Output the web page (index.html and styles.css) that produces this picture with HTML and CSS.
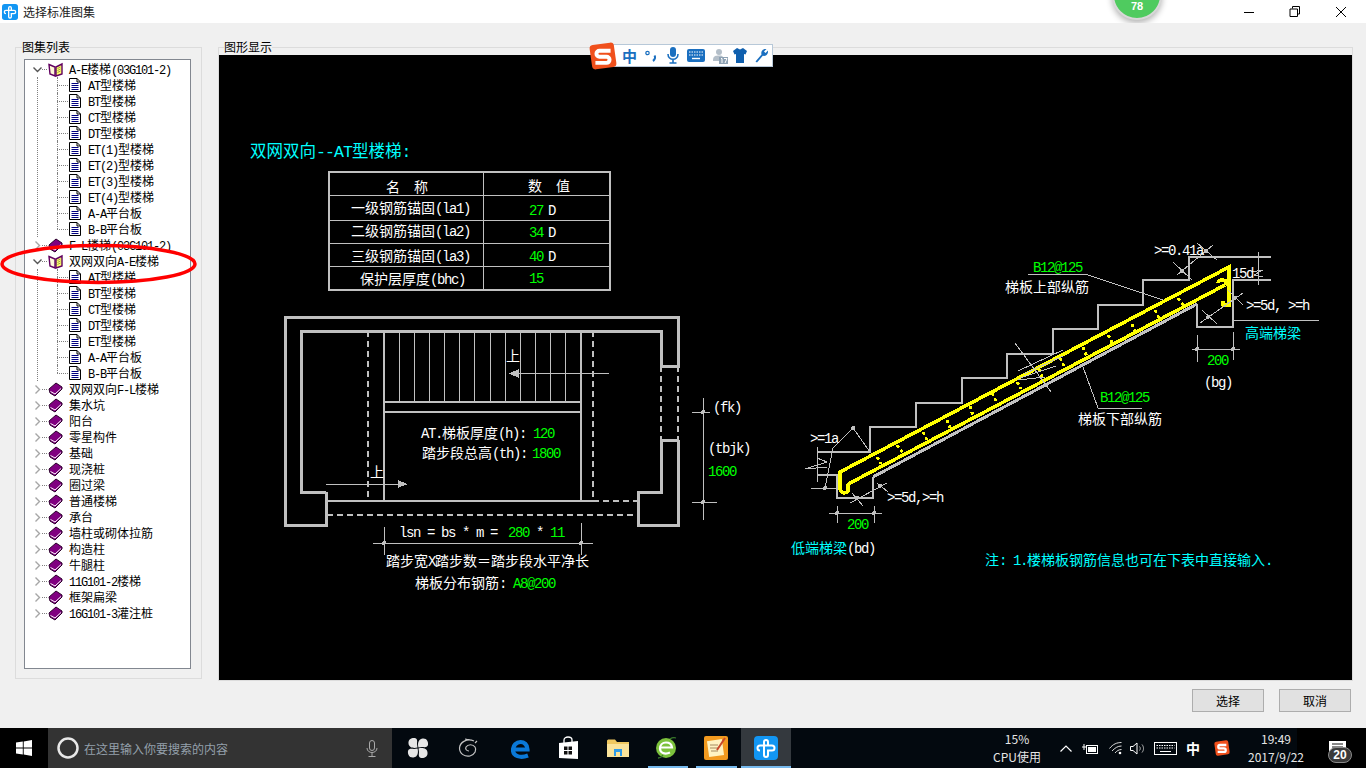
FILE: index.html
```html
<!DOCTYPE html>
<html lang="zh-CN">
<head>
<meta charset="utf-8">
<title>选择标准图集</title>
<link rel="stylesheet" href="styles.css">
</head>
<body>
<svg class="sprite" aria-hidden="true">
  <symbol id="i-app" viewBox="0 0 24 24">
    <rect width="24" height="24" rx="4" fill="#1296f3"/>
    <path d="M6 14.5a2.5 2.5 0 0 1 0-5H18a2.5 2.5 0 0 1 0 5H14V19a2 2 0 0 1-4 0V6a2 2 0 0 1 4 0V9" fill="none" stroke="#fff" stroke-width="2"/>
  </symbol>
  <symbol id="i-sogou" viewBox="0 0 24 24">
    <rect x="1.5" y="1.5" width="21" height="21" rx="3" fill="#f0501c" transform="rotate(-8 12 12)"/>
    <path d="M18.5 7.5H9a2.6 2.6 0 0 0 0 5.2H15a2.6 2.6 0 0 1 0 5.2H5.5" fill="none" stroke="#fff" stroke-width="3.4"/>
  </symbol>
  <symbol id="i-book" viewBox="0 0 15 15">
    <path d="M1 7 8 1 14 5V7L7 14 2 11Z" fill="#800080" stroke="#2a002a"/>
    <path d="M2.5 9.5 7 12 13 6.5" fill="none" stroke="#fff"/>
  </symbol>
  <symbol id="i-open" viewBox="0 0 15 15">
    <path d="M1 2.5 7 5V14L2 12Z" fill="#fff8d8" stroke="#600060" stroke-width="1.4"/>
    <path d="M8 5 14 2V12L8 14Z" fill="#ffff70" stroke="#600060" stroke-width="1.4"/>
    <path d="M9.5 6.5 12.5 5M9.5 8.5 12.5 7M9.5 10.5 12.5 9" stroke="#a0a040"/>
  </symbol>
  <symbol id="i-doc" viewBox="0 0 12 14">
    <path d="M.5.5H8L11.5 4V13.5H.5Z" fill="#fff" stroke="#000"/>
    <path d="M8 .5V4H11.5" fill="none" stroke="#000"/>
    <path d="M2.5 5.5H9.5M2.5 7.5H9.5M2.5 9.5H9.5M2.5 11.5H9.5" stroke="#000080"/>
  </symbol>
  <symbol id="i-down" viewBox="0 0 9 9"><path d="M.5 2.5 4.5 6.5 8.5 2.5" fill="none" stroke="#555" stroke-width="1.4"/></symbol>
  <symbol id="i-right" viewBox="0 0 9 9"><path d="M2.5.5 6.5 4.5 2.5 8.5" fill="none" stroke="#a6a6a6" stroke-width="1.4"/></symbol>
  <symbol id="i-petal" viewBox="0 0 22 22"><path d="M10.500 10.500C7 11.500 2 11 1.500 6.500C1 2 5 .5 8 1C11 2 10 5 10 7Z"/></symbol>
</svg>

<header class="titlebar">
  <svg class="title-icon"><use href="#i-app"/></svg>
  <span class="title-text">选择标准图集</span>
  <div class="win-controls">
    <span class="win-btn"><svg width="12" height="12" viewBox="0 0 12 12"><path d="M1 6.5H11" stroke="#000"/></svg></span>
    <span class="win-btn"><svg width="12" height="12" viewBox="0 0 12 12"><path d="M3.5 2.5V.5H10.5V8H8.5M1 3H8.5V10.5H1Z" fill="none" stroke="#000"/></svg></span>
    <span class="win-btn"><svg width="12" height="12" viewBox="0 0 12 12"><path d="M1 1 11 11M11 1 1 11" stroke="#000"/></svg></span>
  </div>
  <div class="gauge"><span>78</span></div>
</header>

<main class="dialog">
  <div class="content">
    <section class="group group-list">
      <span class="legend">图集列表</span>
      <div class="tree">
        <div class="row"><svg class="chev"><use href="#i-down"/></svg><i class="stub"></i><svg class="book"><use href="#i-open"/></svg><span class="label"><span class="l">A-E</span>楼梯<span class="l">(03G101-2)</span></span></div>
        <div class="kids">
          <div class="leaf"><svg class="doc"><use href="#i-doc"/></svg><span class="leaf-label"><span class="l">AT</span>型楼梯</span></div>
          <div class="leaf"><svg class="doc"><use href="#i-doc"/></svg><span class="leaf-label"><span class="l">BT</span>型楼梯</span></div>
          <div class="leaf"><svg class="doc"><use href="#i-doc"/></svg><span class="leaf-label"><span class="l">CT</span>型楼梯</span></div>
          <div class="leaf"><svg class="doc"><use href="#i-doc"/></svg><span class="leaf-label"><span class="l">DT</span>型楼梯</span></div>
          <div class="leaf"><svg class="doc"><use href="#i-doc"/></svg><span class="leaf-label"><span class="l">ET(1)</span>型楼梯</span></div>
          <div class="leaf"><svg class="doc"><use href="#i-doc"/></svg><span class="leaf-label"><span class="l">ET(2)</span>型楼梯</span></div>
          <div class="leaf"><svg class="doc"><use href="#i-doc"/></svg><span class="leaf-label"><span class="l">ET(3)</span>型楼梯</span></div>
          <div class="leaf"><svg class="doc"><use href="#i-doc"/></svg><span class="leaf-label"><span class="l">ET(4)</span>型楼梯</span></div>
          <div class="leaf"><svg class="doc"><use href="#i-doc"/></svg><span class="leaf-label"><span class="l">A-A</span>平台板</span></div>
          <div class="leaf"><svg class="doc"><use href="#i-doc"/></svg><span class="leaf-label"><span class="l">B-B</span>平台板</span></div>
        </div>
        <div class="row"><svg class="chev"><use href="#i-right"/></svg><i class="stub"></i><svg class="book"><use href="#i-book"/></svg><span class="label"><span class="l">F-L</span>楼梯<span class="l">(03G101-2)</span></span></div>
        <div class="row"><svg class="chev"><use href="#i-down"/></svg><i class="stub"></i><svg class="book"><use href="#i-open"/></svg><span class="label">双网双向<span class="l">A-E</span>楼梯</span></div>
        <div class="kids">
          <div class="leaf"><svg class="doc"><use href="#i-doc"/></svg><span class="leaf-label"><span class="l">AT</span>型楼梯</span></div>
          <div class="leaf"><svg class="doc"><use href="#i-doc"/></svg><span class="leaf-label"><span class="l">BT</span>型楼梯</span></div>
          <div class="leaf"><svg class="doc"><use href="#i-doc"/></svg><span class="leaf-label"><span class="l">CT</span>型楼梯</span></div>
          <div class="leaf"><svg class="doc"><use href="#i-doc"/></svg><span class="leaf-label"><span class="l">DT</span>型楼梯</span></div>
          <div class="leaf"><svg class="doc"><use href="#i-doc"/></svg><span class="leaf-label"><span class="l">ET</span>型楼梯</span></div>
          <div class="leaf"><svg class="doc"><use href="#i-doc"/></svg><span class="leaf-label"><span class="l">A-A</span>平台板</span></div>
          <div class="leaf"><svg class="doc"><use href="#i-doc"/></svg><span class="leaf-label"><span class="l">B-B</span>平台板</span></div>
        </div>
        <div class="row"><svg class="chev"><use href="#i-right"/></svg><i class="stub"></i><svg class="book"><use href="#i-book"/></svg><span class="label">双网双向<span class="l">F-L</span>楼梯</span></div>
        <div class="row"><svg class="chev"><use href="#i-right"/></svg><i class="stub"></i><svg class="book"><use href="#i-book"/></svg><span class="label">集水坑</span></div>
        <div class="row"><svg class="chev"><use href="#i-right"/></svg><i class="stub"></i><svg class="book"><use href="#i-book"/></svg><span class="label">阳台</span></div>
        <div class="row"><svg class="chev"><use href="#i-right"/></svg><i class="stub"></i><svg class="book"><use href="#i-book"/></svg><span class="label">零星构件</span></div>
        <div class="row"><svg class="chev"><use href="#i-right"/></svg><i class="stub"></i><svg class="book"><use href="#i-book"/></svg><span class="label">基础</span></div>
        <div class="row"><svg class="chev"><use href="#i-right"/></svg><i class="stub"></i><svg class="book"><use href="#i-book"/></svg><span class="label">现浇桩</span></div>
        <div class="row"><svg class="chev"><use href="#i-right"/></svg><i class="stub"></i><svg class="book"><use href="#i-book"/></svg><span class="label">圈过梁</span></div>
        <div class="row"><svg class="chev"><use href="#i-right"/></svg><i class="stub"></i><svg class="book"><use href="#i-book"/></svg><span class="label">普通楼梯</span></div>
        <div class="row"><svg class="chev"><use href="#i-right"/></svg><i class="stub"></i><svg class="book"><use href="#i-book"/></svg><span class="label">承台</span></div>
        <div class="row"><svg class="chev"><use href="#i-right"/></svg><i class="stub"></i><svg class="book"><use href="#i-book"/></svg><span class="label">墙柱或砌体拉筋</span></div>
        <div class="row"><svg class="chev"><use href="#i-right"/></svg><i class="stub"></i><svg class="book"><use href="#i-book"/></svg><span class="label">构造柱</span></div>
        <div class="row"><svg class="chev"><use href="#i-right"/></svg><i class="stub"></i><svg class="book"><use href="#i-book"/></svg><span class="label">牛腿柱</span></div>
        <div class="row"><svg class="chev"><use href="#i-right"/></svg><i class="stub"></i><svg class="book"><use href="#i-book"/></svg><span class="label"><span class="l">11G101-2</span>楼梯</span></div>
        <div class="row"><svg class="chev"><use href="#i-right"/></svg><i class="stub"></i><svg class="book"><use href="#i-book"/></svg><span class="label">框架扁梁</span></div>
        <div class="row"><svg class="chev"><use href="#i-right"/></svg><i class="stub"></i><svg class="book"><use href="#i-book"/></svg><span class="label"><span class="l">16G101-3</span>灌注桩</span></div>
      </div>
    </section>

    <section class="group group-view">
      <span class="legend">图形显示</span>
      <svg class="drawing" viewBox="219 55 1133 625" width="1133" height="625">
        <!-- table -->
        <rect class="w2" x="329" y="172" width="281" height="118"/>
        <path class="w1" d="M483 172V290M329 195H610M329 220H610M329 243H610M329 266H610"/>
        <text class="t title" x="250" y="157">双网双向<tspan class="lt">--AT</tspan>型楼梯<tspan class="lt">:</tspan></text>
        <text class="t" x="386 414" y="192">名称</text>
        <text class="t" x="528 556" y="191">数值</text>
        <text class="t" x="351" y="213">一级钢筋锚固<tspan class="l">(la1)</tspan></text>
        <text class="t" x="351" y="236">二级钢筋锚固<tspan class="l">(la2)</tspan></text>
        <text class="t" x="351" y="261">三级钢筋锚固<tspan class="l">(la3)</tspan></text>
        <text class="t" x="360" y="284">保护层厚度<tspan class="l">(bhc)</tspan></text>
        <text class="n g" x="529" y="215">27</text><text class="n" x="548" y="215">D</text>
        <text class="n g" x="529" y="237">34</text><text class="n" x="548" y="237">D</text>
        <text class="n g" x="529" y="261">40</text><text class="n" x="548" y="261">D</text>
        <text class="n g" x="529" y="283">15</text>

        <!-- plan -->
        <path class="w3" d="M326 492V525H285V317H678V366H661V331H301V492H326"/>
        <path class="w3" d="M661 366V331M678 440V525H638V492H661V440H678"/>
        <path class="w2" d="M661 366H678M326 501H593M384 331V501M581 331V501M384 402H581M384 412H581"/>
        <path class="d2" d="M661 366V440M678 366V440M368 331V501M593 331V501M593 501H638M327 515H638"/>
        <path class="w1" d="M399.5 331V402M414.5 331V402M429.5 331V402M444.5 331V402M459.5 331V402M474.5 331V402M490 331V402M505.5 331V402M520.5 331V402M535.5 331V402M550.5 331V402M565.5 331V402"/>
        <path class="w1" d="M509 373.5H609M326 484H407"/>
        <path class="fillg" d="M509 373.5 519 369V378ZM407 484 398 480V488Z"/>
        <text class="t" x="506" y="361">上</text>
        <text class="t" x="370" y="477">上</text>
        <text class="t" x="421" y="438"><tspan class="l">AT.</tspan>梯板厚度<tspan class="l">(h):</tspan></text>
        <text class="n g" x="533" y="438">120</text>
        <text class="t" x="422" y="458">踏步段总高<tspan class="l">(th):</tspan></text>
        <text class="n g" x="532" y="458">1800</text>
        <text class="n" x="713" y="412">(fk)</text>
        <text class="n" x="708" y="453">(tbjk)</text>
        <text class="n g" x="708" y="476">1600</text>
        <path class="w1" d="M703 398V520M692 412H710M692 502H717M373 543H593M384 527V555M581 523V555"/>
        <circle class="fillg" cx="703" cy="412" r="2"/><circle class="fillg" cx="703" cy="502" r="2"/>
        <circle class="fillg" cx="384" cy="543" r="2"/><circle class="fillg" cx="581" cy="543" r="2"/>
        <text class="n" x="399" y="537">lsn = bs * m =</text>
        <text class="n g" x="508" y="537">280</text><text class="n" x="536" y="537">*</text><text class="n g" x="550" y="537">11</text>
        <text class="t" x="386" y="566">踏步宽<tspan class="l">X</tspan>踏步数＝踏步段水平净长</text>
        <text class="t" x="415" y="588">梯板分布钢筋<tspan class="l">:</tspan></text>
        <text class="n g" x="513" y="588">A8@200</text>

        <!-- section -->
        <path class="w2" d="M817 475H837V498H873V477M1197 304V327H1233V280H1271"/>
        <path class="w2" d="M817 452H870V427H916V403H962V378H1007V354H1053V329H1098V305H1143V280H1189V257H1271"/>
        <path class="w3" d="M873 477 1197 304"/>
        <path class="y" d="M1225 285 852 482Q847 484 848 488M1229 307V267L840 472V489Q843 496 848 491V486M1225 285Q1228 280 1222 280Q1218 280 1218 283M1229 304Q1226 306 1223 305V301"/>
        <path class="ys" d="M1178 298 1183 305M1155 310 1159 318M1132 324 1135 332M1108 335 1113 344M1083 347 1087 357M1060 358 1065 368M1039 369 1043 380M1017 382 1021 389M992 393 997 403M970 406 973 416M947 420 950 428M923 432 928 442M897 445 903 453M877 457 881 464"/>
        <path class="w1" d="M1177 275 1213 245M1173 262 1192 280M1197 243 1217 260M1258 252V285M1252 272 1263 270 1254 275 1263 277M1243 293 1200 323M1228 290 1243 305M1202 310 1217 324M1233 320H1319M1192 349H1240M1197 335V362M1233 332V360M1028 274H1085L1163 300M1083 367 1098 408H1142"/>
        <path class="w1" d="M1015 343 1051 392M1018 371 1063 350M1024 374 1063 356M1020 378 1056 366M1018 380 1045 377"/>
        <path class="w1" d="M853 428 870 452M853 428 833 448 825 488M811 488H837M817 447V482M817 458 827 462 805 469 827 467M850 503 887 483M877 483 888 492M852 493 863 506M829 513H882M837 506V523M874 506V523"/>
        <circle class="fillg" cx="1182" cy="271" r="2"/><circle class="fillg" cx="1206" cy="251" r="2"/>
        <circle class="fillg" cx="1235" cy="298" r="2"/><circle class="fillg" cx="1208" cy="317" r="2"/>
        <circle class="fillg" cx="1197" cy="349" r="2"/><circle class="fillg" cx="1233" cy="349" r="2"/>
        <circle class="fillg" cx="853" cy="428" r="2"/><circle class="fillg" cx="825" cy="488" r="2"/>
        <circle class="fillg" cx="880" cy="486" r="2"/><circle class="fillg" cx="857" cy="498" r="2"/>
        <circle class="fillg" cx="837" cy="513" r="2"/><circle class="fillg" cx="874" cy="513" r="2"/>
        <text class="n" x="1154" y="255">&gt;=0.41a</text>
        <text class="n" x="1232" y="278">15d</text>
        <text class="n" x="1246" y="310">&gt;=5d, &gt;=h</text>
        <text class="t c" x="1245" y="338">高端梯梁</text>
        <text class="n g" x="1207" y="365">200</text>
        <text class="n" x="1204" y="387">(bg)</text>
        <text class="n g" x="1033" y="272">B12@125</text>
        <text class="t" x="1005" y="292">梯板上部纵筋</text>
        <text class="n g" x="1100" y="402">B12@125</text>
        <text class="t" x="1078" y="424">梯板下部纵筋</text>
        <text class="n" x="810" y="443">&gt;=1a</text>
        <text class="n" x="887" y="502">&gt;=5d,&gt;=h</text>
        <text class="n g" x="847" y="529">200</text>
        <text class="t c" x="791" y="553">低端梯梁<tspan class="lw">(bd)</tspan></text>
        <text class="t c" x="985" y="565">注<tspan class="l">: 1.</tspan>楼梯板钢筋信息也可在下表中直接输入<tspan class="l">.</tspan></text>
      </svg>
    </section>
  </div>
  <footer class="actions">
    <button class="btn" type="button">选择</button>
    <button class="btn" type="button">取消</button>
  </footer>

  <svg class="red-ring" width="200" height="44" viewBox="0 0 200 44"><ellipse cx="98.500" cy="22" rx="96.500" ry="18.500"/></svg>

  <div class="ime">
    <svg class="ime-logo"><use href="#i-sogou"/></svg>
    <span class="ime-zh">中</span>
    <svg width="12" height="14" viewBox="0 0 12 14"><circle cx="2.5" cy="4" r="1.7" fill="none" stroke="#1a6fc0" stroke-width="1.2"/><path d="M9.5 6.5C10.5 8 10 10.5 8 12" fill="none" stroke="#1a6fc0" stroke-width="2.2"/></svg>
    <svg width="12" height="17" viewBox="0 0 12 17"><rect x="3" y="0" width="6" height="10" rx="3" fill="#1a6fc0"/><path d="M1 7C1 14 11 14 11 7M6 12V16M2.5 16H9.5" fill="none" stroke="#1a6fc0" stroke-width="1.6"/></svg>
    <svg width="18" height="13" viewBox="0 0 18 13"><rect width="18" height="13" rx="2" fill="#1a6fc0"/><path d="M2 3H16M2 6H16" stroke="#fff" stroke-dasharray="1.5 1"/><path d="M5 9.5H13" stroke="#fff" stroke-width="1.4"/></svg>
    <svg width="16" height="16" viewBox="0 0 16 16"><circle cx="7" cy="4" r="3" fill="#b4bfc9"/><path d="M1 12C1 8 4 7.500 7 7.500S11 8 11 10V13H1Z" fill="#b4bfc9"/><rect x="7" y="9" width="9" height="7" fill="#8ea2b4"/><path d="M9 10.500H10V15M12 10.500H15L13 15" fill="none" stroke="#fff"/></svg>
    <svg width="14" height="15" viewBox="0 0 14 15"><path d="M4 0 7 1.500 10 0 14 3 12.500 6.500 11 6V15H3V6L1.500 6.500 0 3Z" fill="#0f5fae"/></svg>
    <svg width="14" height="15" viewBox="0 0 14 15"><path d="M1.500 13.500 7.500 6.500C6.500 3 9 .5 12.500 1L10 3.500 11.500 5 14 2.500C14.500 6 12 8.500 8.800 7.800L3 14.500Z" fill="#1a6fc0"/></svg>
  </div>
</main>

<nav class="taskbar">
  <div class="start">
    <svg width="16" height="16" viewBox="0 0 16 16"><path d="M0 2.500 6.800 1.500V7.500H0ZM7.700 1.400 16 0V7.500H7.700ZM0 8.500H6.800V14.500L0 13.500ZM7.700 8.500H16V16L7.700 14.600Z" fill="#fff"/></svg>
  </div>
  <div class="search">
    <svg class="cortana" width="22" height="22" viewBox="0 0 22 22"><circle cx="11" cy="11" r="9.500" fill="none" stroke="#e8e8e8" stroke-width="2.500"/></svg>
    <span class="search-text">在这里输入你要搜索的内容</span>
    <svg class="search-mic" width="12" height="17" viewBox="0 0 12 17"><rect x="3.500" y=".5" width="5" height="10" rx="2.500" fill="none" stroke="#aaa"/><path d="M1 8C1 14 11 14 11 8M6 13V16.500M2.500 16.500H9.500" fill="none" stroke="#aaa"/></svg>
  </div>
  <div class="apps">
    <span class="app"><svg class="fan" width="22" height="22" viewBox="0 0 22 22"><use href="#i-petal"/><use href="#i-petal" transform="rotate(90 11 11)"/><use href="#i-petal" transform="rotate(180 11 11)"/><use href="#i-petal" transform="rotate(270 11 11)"/></svg></span>
    <span class="app"><svg width="20" height="20" viewBox="0 0 20 20"><path d="M16 3C9 0 2 4 1.500 10C1.500 16 7 19 12 18C17 16.500 19 12 17 9C15 6 10 6 8 9C7 11 8.500 13 11 13M12 2 7 1M17 5 19 3" fill="none" stroke="#c4c4c4" stroke-width="1.200"/></svg></span>
    <span class="app app-edge"><svg width="20" height="21" viewBox="0 0 20 21"><path d="M3.500 11.500H16.500C16.500 6.500 13 4 9.500 4C5.500 4 2 7.500 2 12C2 18 9 20.500 17 17.500" fill="none" stroke="#0a78d7" stroke-width="4.200"/></svg></span>
    <span class="app app-shift"><svg width="21" height="24" viewBox="0 0 21 24"><path d="M1 7 20 5V23L1 22Z" fill="#fff"/><path d="M6 7V4C6 0 14 0 14 4V6" fill="none" stroke="#fff" stroke-width="1.300"/><path d="M6 10.500H9.500V14H6ZM10.500 10.500H14V14H10.500ZM6 15H9.500V18.500H6ZM10.500 15H14V18.500H10.500Z" fill="#111"/></svg></span>
    <span class="app app-shift"><svg width="22" height="18" viewBox="0 0 22 18"><path d="M0 2C0 1 1 .5 1.500 .5H8L10 3H22V18H0Z" fill="#f0c860"/><path d="M0 5H22V18H0Z" fill="#fbe39a"/><path d="M7 10H15V17H13V13H9V17H7Z" fill="#2f9be8"/></svg></span>
    <span class="app"><svg width="22" height="22" viewBox="0 0 22 22"><circle cx="11" cy="11" r="10" fill="#7cc13c"/><path d="M5 10.500H17C16.500 6.500 13 5.500 11 5.500C7.500 5.500 5 8 5 11.500C5 15.500 9.500 18 15 15.500" fill="none" stroke="#fff" stroke-width="2.200"/><path d="M3 21C6 21 8 18 8 18M15 2C18 0 21 1 21 1" fill="none" stroke="#39792a" stroke-width="1.300"/></svg></span>
    <span class="app"><svg width="24" height="24" viewBox="0 0 24 24"><rect width="24" height="24" rx="2" fill="#f29a1f"/><rect x="4" y="4" width="15" height="16" fill="#fff3c2" transform="rotate(-8 12 12)"/><path d="M6 9H14M6 12H14M7 15H14" stroke="#a58a60"/><path d="M13 14 21 2" stroke="#c9482a" stroke-width="2"/></svg></span>
    <span class="app app-active"><svg width="24" height="24"><use href="#i-app"/></svg></span>
  </div>
  <div class="tray">
    <div class="cpu"><span>15%</span><span>CPU使用</span></div>
    <span class="tray-cell w20"><svg width="12" height="7" viewBox="0 0 12 7"><path d="M.5 6.500 6 1 11.500 6.500" fill="none" stroke="#fff" stroke-width="1.200"/></svg></span>
    <span class="tray-cell w28"><svg width="16" height="11" viewBox="0 0 16 11"><rect x="4.500" y="2.500" width="11" height="8" fill="none" stroke="#fff"/><rect x="6" y="4" width="8" height="5" fill="#fff"/><path d="M0 4H4M2 1V7" stroke="#fff"/></svg></span>
    <span class="tray-cell w23"><svg width="13" height="13" viewBox="0 0 13 13"><path d="M.5 6.500C4 2 8 .5 12.500.5M3 9C6 6 8.500 4 12.500 4M6 11C7.500 9 10 7.500 12.500 7.500" fill="none" stroke="#ddd"/><circle cx="11" cy="11" r="1.300" fill="#fff"/></svg></span>
    <span class="tray-cell w21"><svg width="15" height="13" viewBox="0 0 15 13"><path d="M.5 4.500H3L7 1V12L3 8.500H.5Z" fill="none" stroke="#fff"/><path d="M9.500 4.500C10.500 5.500 10.500 7.500 9.500 8.500M12 2.500C14 5 14 8 12 10.500" fill="none" stroke="#bbb"/></svg></span>
    <span class="tray-cell w35"><svg width="23" height="13" viewBox="0 0 23 13"><rect x=".5" y=".5" width="22" height="12" fill="none" stroke="#fff"/><path d="M2.500 3.500H20.500M2.500 6H20.500" stroke="#fff" stroke-dasharray="1.500 1"/><path d="M6 9.500H17" stroke="#fff"/></svg></span>
    <span class="tray-cell w20 tray-zh">中</span>
    <span class="tray-cell w38"><svg width="16" height="16"><use href="#i-sogou"/></svg></span>
    <div class="clock"><span>19:49</span><span>2017/9/22</span></div>
    <span class="tray-cell w55 notif"><svg width="20" height="15" viewBox="0 0 20 15"><path d="M0 0H17V12H0Z" fill="#fff"/><path d="M3 3H14M3 6H14M3 9H10" stroke="#111"/></svg><span class="badge">20</span></span>
  </div>
</nav>
</body>
</html>
```

FILE: styles.css
```css
* { box-sizing: border-box; }
html, body { margin: 0; padding: 0; }
body {
  width: 1366px;
  height: 768px;
  overflow: hidden;
  position: relative;
  background: #f0f0f0;
  font-family: "Noto Sans CJK SC", "Liberation Sans", sans-serif;
  font-size: 12px;
  color: #000;
}
.sprite { position: absolute; width: 0; height: 0; }

/* title bar */
.titlebar {
  position: relative;
  height: 23px;
  background: #fff;
  display: flex;
  align-items: center;
  padding-left: 2px;
  overflow: hidden;
}
.title-icon { width: 16px; height: 16px; }
.title-text { margin-left: 5px; font-size: 12px; color: #222; }
.win-controls { margin-left: auto; display: flex; padding-right: 2px; }
.win-btn { width: 46px; height: 23px; display: flex; align-items: center; justify-content: center; }
.gauge {
  position: absolute;
  left: 1112px;
  top: -30px;
  width: 50px;
  height: 50px;
  border-radius: 50%;
  background: #4fcb5f;
  border: 2px solid #d8d8d8;
  box-shadow: 0 3px 6px rgba(0, 0, 0, .3);
  display: flex;
  align-items: flex-end;
  justify-content: center;
  padding-bottom: 5px;
  color: #fff;
  font-family: "Liberation Sans", sans-serif;
  font-weight: bold;
  font-size: 11px;
  line-height: 13px;
}

/* dialog */
.dialog { position: relative; height: 705px; padding: 24px 13px 0 15px; }
.content { display: flex; align-items: flex-start; gap: 16px; height: 634px; }
.group { border: 1px solid #dcdcdc; }
.group-list { width: 187px; height: 632px; }
.group-view { flex: 1; height: 634px; }
.legend {
  display: block;
  width: max-content;
  height: 14px;
  line-height: 14px;
  margin: -8px 0 0 6px;
  background: #f0f0f0;
  font-size: 12px;
}
.group-view .legend { margin-left: 5px; }

/* tree */
.tree {
  width: 167px;
  height: 610px;
  margin: 5px 0 0 8px;
  padding-top: 1px;
  background: #fff;
  border: 1px solid #828790;
  overflow: hidden;
}
.row { height: 16px; display: flex; align-items: center; padding-left: 8px; white-space: nowrap; }
.chev { width: 9px; height: 9px; flex: none; }
.stub { width: 5px; margin-right: 1px; border-top: 1px dotted #808080; flex: none; }
.book { width: 15px; height: 15px; flex: none; }
.label { display: block; height: 16px; margin-left: 6px; line-height: 16px; }
.l { font-family: "Liberation Mono", monospace; font-size: 12px; line-height: 1; letter-spacing: -1.2px; }
.kids { margin-left: 12px; padding-left: 19px; border-left: 1px dotted #808080; }
.leaf { position: relative; height: 16px; display: flex; align-items: center; padding-left: 12px; white-space: nowrap; }
.leaf::before { content: ""; position: absolute; left: 0; top: 0; height: 16px; border-left: 1px dotted #808080; }
.leaf:last-child::before { height: 8px; }
.leaf::after { content: ""; position: absolute; left: 0; top: 8px; width: 11px; border-top: 1px dotted #808080; }
.doc { width: 12px; height: 14px; flex: none; }
.leaf-label { display: block; height: 16px; margin-left: 7px; line-height: 16px; }

/* drawing */
.drawing { display: block; margin-top: 1px; background: #000; shape-rendering: crispEdges; }
.drawing text { white-space: pre; }
.w1, .w2, .w3, .d2, .y, .ys { fill: none; }
.w1 { stroke: #c0c0c0; stroke-width: 1; }
.w2 { stroke: #c0c0c0; stroke-width: 2; }
.w3 { stroke: #c0c0c0; stroke-width: 3; }
.d2 { stroke: #c0c0c0; stroke-width: 2; stroke-dasharray: 6 4; }
.y { stroke: #ffff00; stroke-width: 3.500; }
.ys { stroke: #ffff00; stroke-width: 3; stroke-dasharray: 3 3; }
.fillg { fill: #c0c0c0; }
.t { fill: #fff; font-family: "Noto Sans CJK SC", sans-serif; font-size: 14px; }
.t .l, .lw { font-family: "Liberation Mono", monospace; font-size: 14px; letter-spacing: -1.4px; }
.lw { fill: #fff; }
.title { fill: #00ffff; font-size: 16.500px; }
.lt { font-family: "Liberation Mono", monospace; font-size: 16.500px; letter-spacing: -.9px; }
.n { fill: #fff; font-family: "Liberation Mono", monospace; font-size: 14px; letter-spacing: -1.4px; }
.drawing .g { fill: #00ff00; }
.drawing .c { fill: #00ffff; }

/* buttons */
.actions { display: flex; justify-content: flex-end; gap: 15px; padding: 8px 2px 0 0; }
.btn {
  width: 72px;
  height: 23px;
  padding: 0;
  background: #e1e1e1;
  border: 1px solid #adadad;
  font-family: inherit;
  font-size: 12px;
  color: #000;
}

/* overlays */
.red-ring { position: absolute; left: 0; top: 219px; fill: none; }
.red-ring ellipse { fill: none; stroke: #f00; stroke-width: 3.500px; }
.ime {
  position: absolute;
  left: 613px;
  top: 21px;
  width: 160px;
  height: 23px;
  background: #fff;
  border: 1px solid #b7c8d8;
  padding-left: 8px;
  display: grid;
  grid-template-columns: 23px 22px 20px 25px 21px 21px 14px;
  align-items: center;
  justify-items: start;
}
.ime-logo { position: absolute; left: -25px; top: -3px; width: 28px; height: 28px; }
.ime-zh { color: #1a6fc0; font-weight: bold; font-size: 15px; line-height: 21px; }

/* taskbar */
.taskbar { display: flex; height: 40px; background: #03090f; color: #fff; }
.start { width: 48px; background: #000; display: flex; align-items: center; justify-content: center; }
.search { width: 344px; background: #333; display: flex; align-items: center; padding-left: 9px; }
.search-text { margin-left: 5px; color: #93a0ab; font-size: 12px; }
.search-mic { margin-left: auto; margin-right: 14px; }
.apps { display: flex; margin-left: 1.200px; }
.app { position: relative; width: 49.700px; height: 40px; display: flex; align-items: center; justify-content: center; }
.app svg { display: block; }
.fan { fill: #e6e6e6; }
.app-edge { padding-left: 7px; }
.app-shift { padding-left: 3px; }
.app:nth-child(6)::after,
.app:nth-child(7)::after,
.app-active::after { content: ""; position: absolute; bottom: 0; height: 2px; background: #76b9ed; }
.app:nth-child(6)::after { left: 6px; right: 3px; }
.app:nth-child(7)::after { left: 5px; right: 4px; }
.app-active { background: #34393e; }
.app-active::after { left: 0; right: 0; }
.tray {
  margin-left: auto;
  display: flex;
  align-items: center;
  width: 379px;
  height: 40px;
  background: linear-gradient(to right, transparent 310px, #000 310px);
}
.cpu, .clock {
  display: flex;
  flex-direction: column;
  align-items: center;
  justify-content: center;
  height: 40px;
  font-size: 12px;
  line-height: 18px;
  color: #e6e6e6;
}
.cpu { width: 60px; margin-right: 9px; }
.clock { width: 70px; }
.tray-cell { display: flex; align-items: center; justify-content: center; height: 40px; }
.w20 { width: 20px; }
.w21 { width: 21px; }
.w23 { width: 23px; }
.w28 { width: 28px; }
.w35 { width: 35px; }
.w38 { width: 38px; }
.w55 { width: 55px; }
.tray-zh { font-size: 14px; font-weight: bold; color: #fff; }
.notif { position: relative; }
.badge {
  position: absolute;
  left: 17px;
  top: 19px;
  width: 24px;
  height: 16px;
  border-radius: 8px;
  background: #3a3a3a;
  border: 1px solid #8a8a8a;
  color: #fff;
  font-family: "Liberation Sans", sans-serif;
  font-weight: bold;
  font-size: 12px;
  line-height: 14px;
  text-align: center;
}
```
